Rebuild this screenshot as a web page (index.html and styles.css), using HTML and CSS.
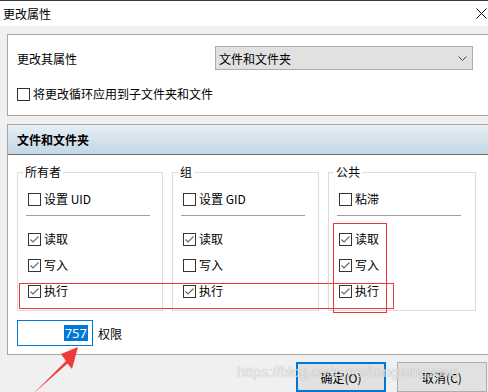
FILE: index.html
```html
<!DOCTYPE html>
<html lang="zh-CN">
<head>
    <meta charset="UTF-8">
    <title>更改属性</title>
    <link rel="stylesheet" href="styles.css">
</head>
<body>
    <div class="titlebar">
        <span>更改属性</span>
        <svg class="close" width="11" height="11" viewBox="0 0 11 11"><path d="M0.5 0.5L10.5 10.5M10.5 0.5L0.5 10.5" stroke="#111" stroke-width="1" fill="none"/></svg>
    </div>

    <div class="dialog">
        <div class="panel panel-top">
            <div class="attr-row">
                <span class="attr-label">更改其属性</span>
                <div class="select">
                    文件和文件夹
                    <svg class="chevron" width="9" height="5" viewBox="0 0 9 5"><path d="M0.5 0.5L4.5 4.5L8.5 0.5" stroke="#444" fill="none"/></svg>
                </div>
            </div>
            <div class="check"><span class="box"></span>将更改循环应用到子文件夹和文件</div>
        </div>

        <div class="panel panel-perm">
            <div class="panel-head">文件和文件夹</div>
            <div class="panel-body">
                <div class="groups">
                    <div class="group g-owner">
                        <span class="group-title">所有者</span>
                        <div class="check row"><span class="box"></span>设置 UID</div>
                        <div class="sep"></div>
                        <div class="check row first"><span class="box on"></span>读取</div>
                        <div class="check row"><span class="box on"></span>写入</div>
                        <div class="check row"><span class="box on"></span>执行</div>
                    </div>
                    <div class="group g-group">
                        <span class="group-title">组</span>
                        <div class="check row"><span class="box"></span>设置 GID</div>
                        <div class="sep"></div>
                        <div class="check row first"><span class="box on"></span>读取</div>
                        <div class="check row"><span class="box"></span>写入</div>
                        <div class="check row"><span class="box on"></span>执行</div>
                    </div>
                    <div class="group g-public">
                        <span class="group-title">公共</span>
                        <div class="check row"><span class="box"></span>粘滞</div>
                        <div class="sep"></div>
                        <div class="check row first"><span class="box on"></span>读取</div>
                        <div class="check row"><span class="box on"></span>写入</div>
                        <div class="check row"><span class="box on"></span>执行</div>
                    </div>
                </div>
                <div class="perm-row">
                    <div class="perm-input"><span class="selected">757</span></div>
                    <span class="perm-label">权限</span>
                </div>
            </div>
        </div>

        <div class="buttons">
            <button class="btn btn-default">确定(O)</button>
            <button class="btn">取消(C)</button>
        </div>
    </div>

    <!-- annotations drawn over the screenshot -->
    <div class="mark mark-row"></div>
    <div class="mark mark-col"></div>
    <svg class="arrow" width="90" height="60" viewBox="0 0 90 60">
        <polygon points="78,1 72,23 67.5,17.5 33,48 66,15 61,8" fill="#f03a3a" transform="translate(0,0)"/>
    </svg>
    <div class="watermark">https://blog.csdn.net/tongtongsong</div>
</body>
</html>
```

FILE: styles.css
```css
html, body {
    margin: 0;
    padding: 0;
    width: 488px;
    height: 392px;
    overflow: hidden;
}

body {
    position: relative;
    background-color: #f0f0f0;
    font-family: "Noto Sans CJK SC", "Microsoft YaHei", sans-serif;
    font-size: 12px;
    color: #000;
}

.titlebar {
    box-sizing: border-box;
    height: 26px;
    border-top: 1px solid #3a3a3a;
    background-color: #fff;
    display: flex;
    align-items: center;
    padding-left: 3px;
}

.close {
    margin-left: auto;
    margin-right: 1px;
}

.dialog {
    box-sizing: border-box;
    width: 500px;
    padding: 8px 13px 0 7px;
}

.panel {
    background-color: #fff;
    border: 1px solid #a7a7a7;
    margin-right: -13px;
}

.panel-top {
    box-sizing: border-box;
    height: 82px;
    padding: 11px 0 0 9px;
}

.attr-row {
    display: flex;
    align-items: center;
    height: 24px;
}

.attr-label {
    width: 198px;
}

.select {
    box-sizing: border-box;
    width: 258px;
    height: 24px;
    border: 1px solid #adadad;
    background-color: #e1e1e1;
    display: flex;
    align-items: center;
    padding-left: 3px;
}

.chevron {
    margin-left: auto;
    margin-right: 5px;
}

.check {
    display: flex;
    align-items: center;
    gap: 3px;
    height: 16px;
    line-height: 16px;
}

.panel-top .check {
    margin-top: 16px;
}

.box {
    box-sizing: border-box;
    width: 13px;
    height: 13px;
    border: 1px solid #333;
    background-color: #fff;
    flex-shrink: 0;
}

.box.on {
    background-image: url("data:image/svg+xml;utf8,<svg xmlns='http://www.w3.org/2000/svg' width='11' height='11' viewBox='0 0 11 11'><path d='M1.5 5.5L4 8L9.5 2.5' stroke='%23666' stroke-width='1.1' fill='none'/></svg>");
    background-repeat: no-repeat;
}

.panel-perm {
    margin-top: 8px;
}

.panel-head {
    height: 29px;
    line-height: 29px;
    padding-left: 9px;
    font-weight: bold;
    background: linear-gradient(#e6eff5, #c3d7e6);
    border-bottom: 1px solid #6e6e6e;
}

.panel-body {
    padding: 17px 0 8px 9px;
}

.groups {
    display: flex;
    gap: 9px;
}

.group {
    box-sizing: border-box;
    border: 1px solid #dcdcdc;
    padding: 0 0 6px 10px;
}

.g-owner { width: 146px; }
.g-group { width: 147px; }
.g-public { width: 148px; }

.group-title {
    display: table;
    margin: -9px 0 0 -5px;
    padding: 0 2px;
    height: 16px;
    line-height: 16px;
    background-color: #fff;
}

.row {
    height: 26px;
    line-height: 26px;
}

.group-title + .row {
    margin-top: 6px;
}

.sep {
    margin: 3px 0 0 -2px;
    width: 124px;
    height: 1px;
    background-color: #a0a0a0;
}

.row.first {
    margin-top: 10px;
}

.perm-row {
    display: flex;
    align-items: center;
    margin-top: 9px;
    gap: 5px;
}

.perm-input {
    box-sizing: border-box;
    width: 76px;
    height: 26px;
    border: 1px solid #0078d7;
    display: flex;
    align-items: center;
    justify-content: flex-end;
    padding-right: 4px;
}

.selected {
    background-color: #0078d7;
    color: #fff;
    font-family: "Noto Sans", "DejaVu Sans", sans-serif;
    font-size: 13px;
    line-height: 16px;
    height: 16px;
    padding: 0 1px;
}

.buttons {
    display: flex;
    justify-content: flex-end;
    gap: 11px;
    margin-top: 7px;
}

.btn {
    box-sizing: border-box;
    width: 90px;
    height: 30px;
    background-color: #e1e1e1;
    border: 1px solid #adadad;
    font-family: inherit;
    font-size: 12px;
    color: #000;
    padding: 0;
}

.btn-default {
    border: 2px solid #0078d7;
}

.mark {
    position: absolute;
    border: 1px solid #e8393c;
}

.mark-row {
    left: 19px;
    top: 283px;
    width: 373px;
    height: 24px;
}

.mark-col {
    left: 333px;
    top: 223px;
    width: 52px;
    height: 88px;
}

.arrow {
    position: absolute;
    left: 0;
    top: 346px;
}

.watermark {
    position: absolute;
    left: 237px;
    top: 364px;
    font-family: "Liberation Sans", Arial, sans-serif;
    font-size: 14.5px;
    color: rgba(255, 255, 255, 0.75);
    text-shadow: 0 0 1px rgba(0, 0, 0, 0.35);
    white-space: nowrap;
}
```
